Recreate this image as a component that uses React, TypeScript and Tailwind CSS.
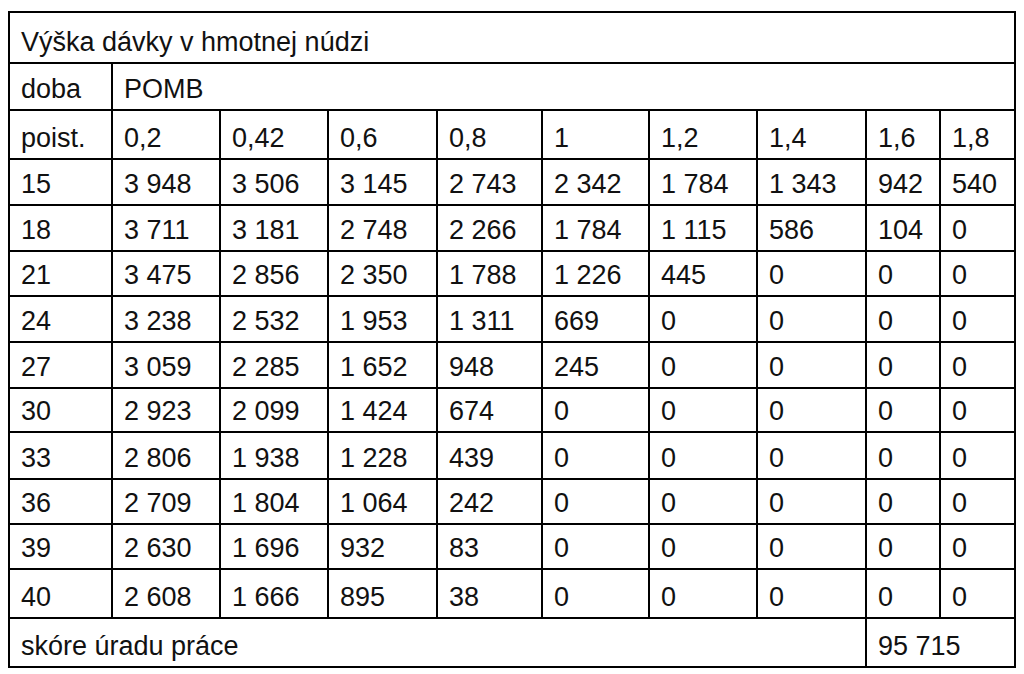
import React from "react";

const rows: string[][] = [
  ["15", "3 948", "3 506", "3 145", "2 743", "2 342", "1 784", "1 343", "942", "540"],
  ["18", "3 711", "3 181", "2 748", "2 266", "1 784", "1 115", "586", "104", "0"],
  ["21", "3 475", "2 856", "2 350", "1 788", "1 226", "445", "0", "0", "0"],
  ["24", "3 238", "2 532", "1 953", "1 311", "669", "0", "0", "0", "0"],
  ["27", "3 059", "2 285", "1 652", "948", "245", "0", "0", "0", "0"],
  ["30", "2 923", "2 099", "1 424", "674", "0", "0", "0", "0", "0"],
  ["33", "2 806", "1 938", "1 228", "439", "0", "0", "0", "0", "0"],
  ["36", "2 709", "1 804", "1 064", "242", "0", "0", "0", "0", "0"],
  ["39", "2 630", "1 696", "932", "83", "0", "0", "0", "0", "0"],
  ["40", "2 608", "1 666", "895", "38", "0", "0", "0", "0", "0"],
];

const header = ["poist.", "0,2", "0,42", "0,6", "0,8", "1", "1,2", "1,4", "1,6", "1,8"];

function Cell({ children, className = "" }: { children: React.ReactNode; className?: string }) {
  return (
    <div className={"bg-white flex items-end pl-[11px] pb-[6px] leading-[27px] whitespace-nowrap " + className}>
      {children}
    </div>
  );
}

export default function App() {
  return (
    <div className="w-[1024px] h-[674px] bg-white pt-[11px] pl-[8px]" style={{ fontFamily: '"Liberation Sans", Arial, sans-serif' }}>
      <div className="w-[1008px] grid grid-cols-[101px_106px_106px_107px_103px_105px_106px_107px_72px_73px] grid-rows-[49px_45px_47px_44px_44px_43px_44px_44px_42px_45px_43px_43px_47px_47px] gap-[2px] p-[2px] bg-black text-[27px] text-[#111]">
        <Cell className="col-span-10">Výška dávky v hmotnej núdzi</Cell>
        <Cell>doba</Cell>
        <Cell className="col-span-9">POMB</Cell>
        {header.map((h, i) => (
          <Cell key={"h" + i}>{h}</Cell>
        ))}
        {rows.map((r, ri) =>
          r.map((v, ci) => <Cell key={ri + "-" + ci}>{v}</Cell>)
        )}
        <Cell className="col-span-8">skóre úradu práce</Cell>
        <Cell className="col-span-2">95 715</Cell>
      </div>
    </div>
  );
}
